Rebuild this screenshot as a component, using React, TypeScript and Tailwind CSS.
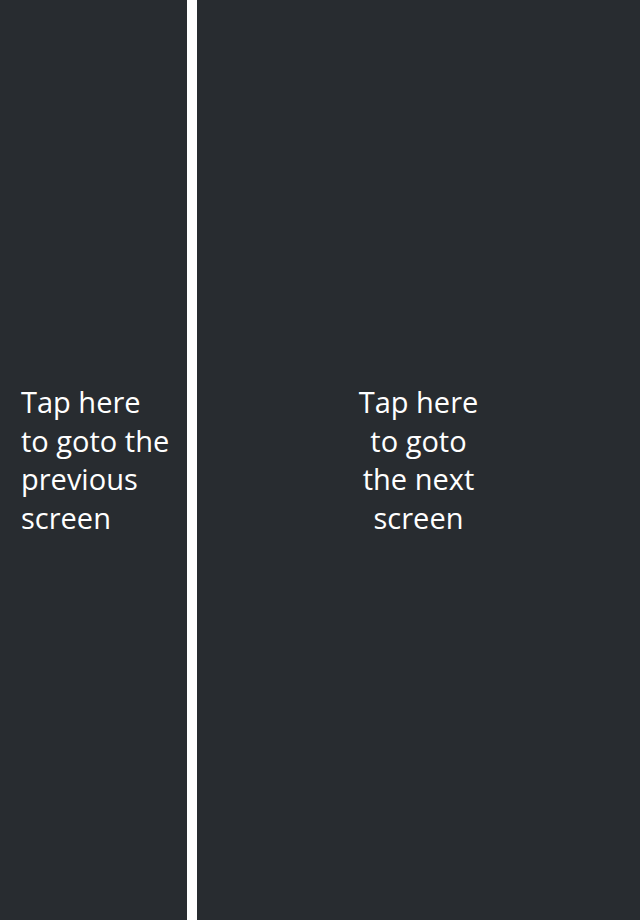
export default function App() {
  return (
    <div
      className="flex h-[920px] w-[640px] bg-[#282c30] text-white"
      style={{ fontFamily: '"Open Sans", "Liberation Sans", sans-serif' }}
    >
      {/* previous */}
      <button className="flex w-[187px] shrink-0 items-center pl-[21px] text-left">
        <span className="text-[29px] leading-[38.5px] whitespace-nowrap">
          Tap here
          <br />
          to goto the
          <br />
          previous
          <br />
          screen
        </span>
      </button>

      <div className="w-[10px] shrink-0 bg-white" />

      {/* next */}
      <button className="flex flex-1 items-center justify-center">
        <span className="text-center text-[29px] leading-[38.5px] whitespace-nowrap">
          Tap here
          <br />
          to goto
          <br />
          the next
          <br />
          screen
        </span>
      </button>
    </div>
  );
}
